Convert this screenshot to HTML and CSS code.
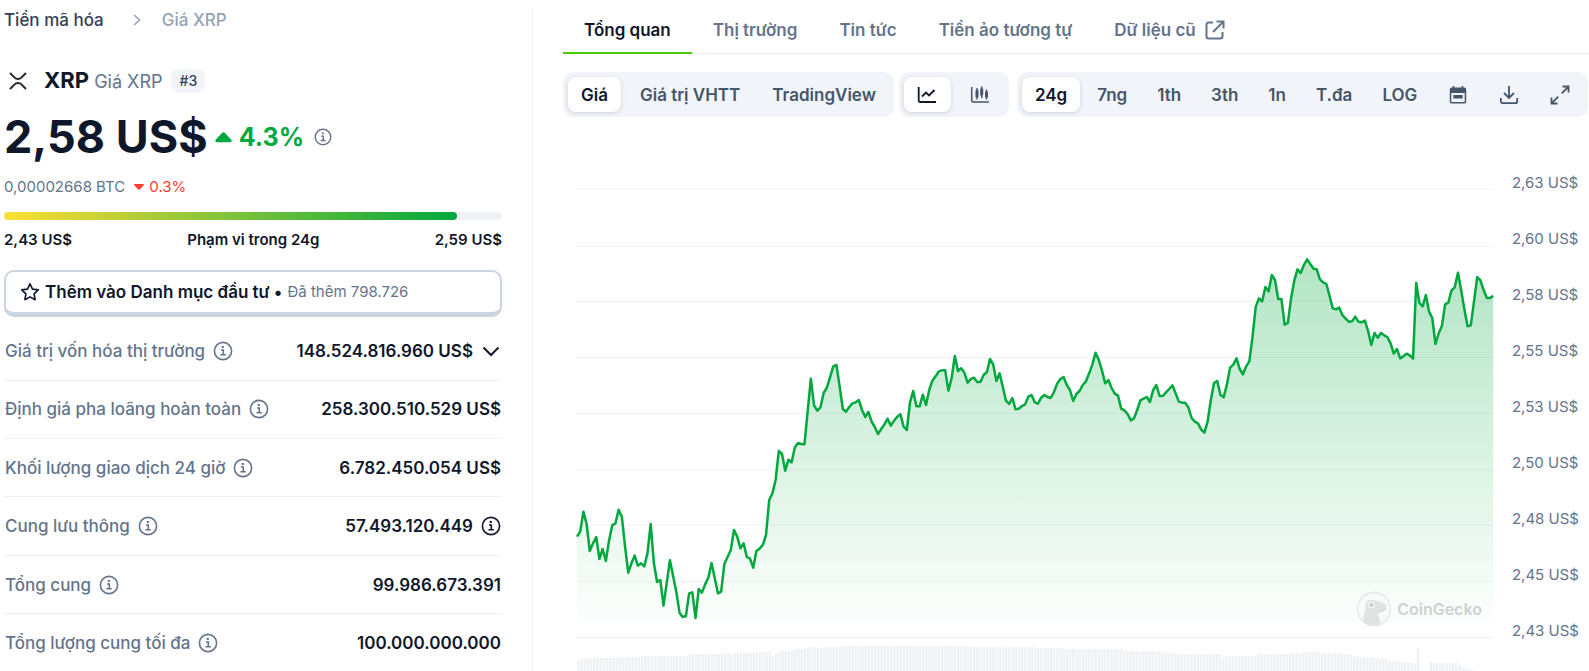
FILE: index.html
```html
<!DOCTYPE html>
<html lang="vi">
<head>
<meta charset="utf-8">
<meta name="viewport" content="width=device-width, initial-scale=1">
<title>XRP – Giá XRP</title>
<link rel="stylesheet" href="styles.css">
</head>
<body>
<svg class="sprite" aria-hidden="true">
  <symbol id="info" viewBox="0 0 20 20">
    <circle cx="10" cy="10" r="8.6" fill="none" stroke="currentColor" stroke-width="1.6"/>
    <circle cx="9.8" cy="5.9" r="1.2" fill="currentColor"/>
    <path d="M8 9h2.3v4.6M7.4 13.8h5.4" fill="none" stroke="currentColor" stroke-width="1.6"/>
  </symbol>
</svg>
<div class="page">
  <aside class="coin">
    <nav class="crumbs" aria-label="Breadcrumb">
      <a class="crumb" href="#">Tiền mã hóa</a>
      <svg class="crumb-sep" viewBox="0 0 10 14" aria-hidden="true"><path d="M2 2l5.5 5L2 12" /></svg>
      <span class="crumb-current">Giá XRP</span>
    </nav>

    <div class="title">
      <svg class="coin-logo" viewBox="0 0 28 28" aria-hidden="true"><path d="M6 6l4.6 4.6a4.8 4.8 0 0 0 6.8 0L22 6M6 22l4.6-4.6a4.8 4.8 0 0 1 6.8 0L22 22"/></svg>
      <h1 class="name">XRP <span class="name-sub">Giá XRP</span></h1>
      <span class="rank">#3</span>
    </div>

    <div class="price-row">
      <span class="price">2,58 US$</span>
      <span class="change">
        <svg class="caret-up" viewBox="0 0 17 11" aria-hidden="true"><path d="M7.5.6a1.5 1.5 0 0 1 2 0l6.8 7.2c.8 1 .3 2.4-1 2.4H1.700c-1.300 0-1.800-1.400-1-2.400z"/></svg>
        4.3%
      </span>
      <svg class="info info-small" aria-hidden="true"><use href="#info"/></svg>
    </div>

    <div class="btc-row">
      <span>0,00002668 BTC</span>
      <span class="btc-change">
        <svg class="caret-down" viewBox="0 0 10 6" aria-hidden="true"><path d="M.8 0h8.400c.7 0 1 .8.5 1.300L5.700 5.400a1 1 0 0 1-1.400 0L.3 1.300C-.2.800.1 0 .8 0z"/></svg>
        0.3%
      </span>
    </div>

    <div class="range"><div class="range-fill"></div></div>
    <div class="range-labels"><span>2,43 US$</span><span>Phạm vi trong 24g</span><span>2,59 US$</span></div>

    <button class="portfolio" type="button">
      <svg class="star" viewBox="0 0 20 20" aria-hidden="true"><path d="M10 1.800l2.500 5.300 5.800.8-4.200 4 1 5.800L10 14.900l-5.100 2.800 1-5.800-4.200-4 5.800-.8z"/></svg>
      <span>Thêm vào Danh mục đầu tư •</span>
      <span class="portfolio-count">Đã thêm 798.726</span>
    </button>

    <table class="stats">
      <tbody>
        <tr><th scope="row"><span class="cell">Giá trị vốn hóa thị trường <svg class="info" aria-hidden="true"><use href="#info"/></svg></span></th>
          <td><span class="cell cell-end">148.524.816.960 US$ <svg class="chevron" viewBox="0 0 20 20" aria-hidden="true"><path d="M2.500 6.500L10 14l7.500-7.500"/></svg></span></td></tr>
        <tr><th scope="row"><span class="cell">Định giá pha loãng hoàn toàn <svg class="info" aria-hidden="true"><use href="#info"/></svg></span></th>
          <td><span class="cell cell-end">258.300.510.529 US$</span></td></tr>
        <tr><th scope="row"><span class="cell">Khối lượng giao dịch 24 giờ <svg class="info" aria-hidden="true"><use href="#info"/></svg></span></th>
          <td><span class="cell cell-end">6.782.450.054 US$</span></td></tr>
        <tr><th scope="row"><span class="cell">Cung lưu thông <svg class="info" aria-hidden="true"><use href="#info"/></svg></span></th>
          <td><span class="cell cell-end">57.493.120.449 <svg class="info" aria-hidden="true"><use href="#info"/></svg></span></td></tr>
        <tr><th scope="row"><span class="cell">Tổng cung <svg class="info" aria-hidden="true"><use href="#info"/></svg></span></th>
          <td><span class="cell cell-end">99.986.673.391</span></td></tr>
        <tr><th scope="row"><span class="cell">Tổng lượng cung tối đa <svg class="info" aria-hidden="true"><use href="#info"/></svg></span></th>
          <td><span class="cell cell-end">100.000.000.000</span></td></tr>
      </tbody>
    </table>
  </aside>

  <main class="main">
    <nav class="tabs">
      <a class="tab tab-active" href="#">Tổng quan</a>
      <a class="tab" href="#">Thị trường</a>
      <a class="tab" href="#">Tin tức</a>
      <a class="tab" href="#">Tiền ảo tương tự</a>
      <a class="tab" href="#">Dữ liệu cũ
        <svg class="external" viewBox="0 0 20 20" aria-hidden="true"><path d="M8 2.500H3.500a2 2 0 0 0-2 2v12a2 2 0 0 0 2 2h12a2 2 0 0 0 2-2V12M11.500 1.500h7v7M18 2L8 12"/></svg>
      </a>
    </nav>

    <div class="toolbar">
      <div class="group">
        <button class="opt opt-on" type="button">Giá</button>
        <button class="opt" type="button">Giá trị VHTT</button>
        <button class="opt" type="button">TradingView</button>
      </div>
      <div class="group">
        <button class="opt opt-icon opt-on" type="button" aria-label="Biểu đồ đường"><svg class="icon" viewBox="0 0 20 20"><path d="M1.700 2v13.500a1.500 1.500 0 0 0 1.500 1.500H19M5 11.500l4-4 3 3 5.500-5.500" fill="none" stroke="currentColor" stroke-width="1.800"/></svg></button>
        <button class="opt opt-icon" type="button" aria-label="Biểu đồ nến"><svg class="icon" viewBox="0 0 20 20"><path d="M1.700 2v13.500a1.500 1.500 0 0 0 1.500 1.500H19M7 3v11.500M11.700 1.500v11.500M16.500 4.500v10" fill="none" stroke="currentColor" stroke-width="1.500"/><rect x="5.500" y="5" width="3" height="7.500" rx=".8"/><rect x="10.200" y="3.500" width="3" height="7" rx=".8"/><rect x="15" y="6.500" width="3" height="6" rx=".8"/></svg></button>
      </div>
      <div class="group group-range">
        <button class="opt opt-on" type="button">24g</button>
        <button class="opt" type="button">7ng</button>
        <button class="opt" type="button">1th</button>
        <button class="opt" type="button">3th</button>
        <button class="opt" type="button">1n</button>
        <button class="opt" type="button">T.đa</button>
        <button class="opt" type="button">LOG</button>
        <button class="opt opt-icon" type="button" aria-label="Chọn ngày"><svg class="icon" viewBox="0 0 20 20"><path d="M5.500 1v3M14.500 1v3" stroke="currentColor" stroke-width="1.600"/><path fill-rule="evenodd" d="M3.500 2.500h13A1.700 1.700 0 0 1 18.200 4.200v12.600a1.700 1.700 0 0 1-1.700 1.700h-13a1.700 1.700 0 0 1-1.700-1.700V4.200a1.700 1.700 0 0 1 1.700-1.700zM3.300 8v8.500c0 .3.200.5.500.5h12.400c.3 0 .5-.2.500-.5V8z"/><rect x="5.300" y="10" width="9.400" height="3.600" rx=".5"/></svg></button>
        <button class="opt opt-icon" type="button" aria-label="Tải xuống"><svg class="icon" viewBox="0 0 20 20"><path d="M10 1v11.500M5 8l5 5 5-5M1.800 13v3.500A1.700 1.700 0 0 0 3.500 18.200h13a1.700 1.700 0 0 0 1.700-1.700V13" fill="none" stroke="currentColor" stroke-width="1.800"/></svg></button>
        <button class="opt opt-icon" type="button" aria-label="Toàn màn hình"><svg class="icon" viewBox="0 0 20 20"><path d="M12.500 1.500h6v6M18.200 1.800l-6.500 6.500M1.500 12.500v6h6M1.800 18.200l6.500-6.500" fill="none" stroke="currentColor" stroke-width="1.800"/></svg></button>
      </div>
    </div>

    <div class="chart">
      <div class="plot">
        <svg class="plot-svg" viewBox="0 0 2754 1662" preserveAspectRatio="none" role="img" aria-label="Biểu đồ giá XRP trong 24 giờ">
          <defs>
            <linearGradient id="fade" gradientUnits="userSpaceOnUse" x1="0" y1="427" x2="0" y2="1550">
              <stop offset="0" stop-color="#00a83e" stop-opacity=".3"/>
              <stop offset="1" stop-color="#00a83e" stop-opacity="0"/>
            </linearGradient>
          </defs>
          <g id="grid" class="grid"></g>
          <g id="volume" class="volume"></g>
          <path id="area" fill="url(#fade)"/>
          <path id="line" class="line"/>
        </svg>
        <div class="watermark">
          <svg class="gecko" viewBox="0 0 36 36" aria-hidden="true">
            <circle cx="18" cy="18" r="16.500" fill="#f8faf9" stroke="#e2e6e4" stroke-width="1.300"/>
            <path d="M7.500 31c-1-5 1-8.500 2-12 .6-2.500-1.200-4.500.8-7.500C12 9 15 8.500 18 9.300c3 .8 6.500 1.500 9.500 3 2.500 1.200 3.500 3.500 2.500 5.500-1.500 2.700-5 3.700-8 4.200 0 3 1.500 5 2 8 .2 1.500 0 3 0 3.500-5.500 2.500-12 1.500-16.500-2.500z" fill="#dfe3e1"/>
            <circle cx="15.500" cy="14" r="3.200" fill="#f8faf9"/>
            <circle cx="15.500" cy="14" r="2" fill="#c6cbc8"/>
            <path d="M22 21c3-.3 6-1.500 8-4" fill="none" stroke="#c9cecb" stroke-width=".8"/>
          </svg>
          <span>CoinGecko</span>
        </div>
      </div>
      <ul class="axis">
        <li>2,63 US$</li><li>2,60 US$</li><li>2,58 US$</li><li>2,55 US$</li><li>2,53 US$</li><li>2,50 US$</li><li>2,48 US$</li><li>2,45 US$</li><li>2,43 US$</li>
      </ul>
    </div>
  </main>
</div>
<script src="chart.js"></script>
</body>
</html>
```

FILE: styles.css
```css
* { box-sizing: border-box; }

body {
  margin: 0;
  background: #fff;
  color: #0f172a;
  font-family: Inter, "Liberation Sans", sans-serif;
  font-size: 17px;
  line-height: 24px;
  overflow: hidden;
}

a { color: inherit; text-decoration: none; }
button { font: inherit; color: inherit; border: 0; cursor: pointer; }
svg { flex: none; }
.sprite { display: none; }

.page { display: flex; min-height: 100vh; padding-top: 8px; }

/* Coin summary column */
.coin {
  display: flex;
  flex-direction: column;
  flex: 0 0 34%;
  max-width: 533px;
  padding: 0 30px 0 4px;
  border-right: 1px solid #eff2f5;
}

.crumbs { display: flex; align-items: center; font-weight: 500; }
.crumb { color: #334155; }
.crumb-sep { width: 10px; height: 14px; margin: 0 20px 0 28px; fill: none; stroke: #94a3b8; stroke-width: 1.5; }
.crumb-current { color: #94a3b8; }

.title { display: flex; align-items: center; margin-top: 35px; height: 28px; }
.coin-logo { width: 28px; height: 28px; fill: none; stroke: #23292f; stroke-width: 2; }
.name { margin: 0 9px 0 12px; font-size: 22px; font-weight: 700; }
.name-sub { color: #64748b; font-size: 18px; font-weight: 400; }
.rank { padding: 0 8px; border-radius: 8px; background: #f1f5f9; color: #334155; font-size: 14px; font-weight: 500; }

.price-row { display: flex; align-items: center; margin-top: 14px; height: 56px; }
.price { font-size: 45px; font-weight: 700; line-height: 56px; }
.change { display: flex; align-items: center; gap: 7px; margin-left: 7px; color: #00a83e; font-size: 25px; font-weight: 700; }
.caret-up { width: 17px; height: 11px; fill: currentColor; }

.btc-row { display: flex; align-items: center; gap: 9px; margin-top: 10px; color: #64748b; font-size: 15px; }
.btc-change { display: flex; align-items: center; gap: 5px; color: #ff3a33; }
.caret-down { width: 10px; height: 6px; fill: currentColor; }

.range { height: 8px; margin-top: 13px; border-radius: 4px; background: #eff2f5; overflow: hidden; }
.range-fill { width: 91%; height: 100%; border-radius: 4px; background: linear-gradient(90deg, #ffde33, #00a83e); }
.range-labels { display: flex; justify-content: space-between; margin-top: 8px; font-size: 15px; font-weight: 600; }

.portfolio {
  display: flex;
  align-items: center;
  gap: 5px;
  margin-top: 18px;
  padding: 8px 14px;
  border: 2px solid #cbd5e1;
  border-bottom-width: 5px;
  border-radius: 10px;
  background: #fff;
  font-weight: 600;
}
.star { width: 20px; height: 20px; fill: none; stroke: currentColor; stroke-width: 1.6; stroke-linejoin: round; }
.portfolio-count { color: #64748b; font-size: 15px; font-weight: 400; }

.stats { flex: 1; width: 100%; margin-top: 6px; border-collapse: collapse; }
.stats th, .stats td { padding: 0 1px; border-bottom: 1px solid #eff2f5; white-space: nowrap; }
.stats tr:last-child > * { border-bottom: 0; }
.stats th { color: #64748b; font-weight: 500; text-align: left; }
.stats td { font-weight: 600; }
.cell { display: flex; align-items: center; gap: 8px; }
.cell-end { justify-content: flex-end; }
.info { width: 20px; height: 20px; }
.info-small { width: 18px; height: 18px; margin-left: 10px; color: #64748b; }
.chevron { width: 20px; height: 20px; fill: none; stroke: currentColor; stroke-width: 2; }

/* Chart column */
.main { display: flex; flex-direction: column; flex: 1; min-width: 0; padding-left: 30px; }

.tabs { display: flex; height: 46px; border-bottom: 1px solid #eff2f5; color: #64748b; font-weight: 600; white-space: nowrap; }
.tab { display: flex; align-items: center; gap: 9px; height: 46px; padding: 0 21px; border-bottom: 2px solid transparent; }
.tab-active { border-color: #4bcc00; color: #0f172a; }
.external { width: 20px; height: 20px; fill: none; stroke: currentColor; stroke-width: 2; }

.toolbar { display: flex; gap: 5px; margin-top: 18px; white-space: nowrap; }
.group { display: flex; flex: none; gap: 6px; padding: 5px; border-radius: 10px; background: #f1f5f9; }
.group-range { gap: 4px; margin-left: 3px; }
.opt { height: 35px; padding: 0 13px; border-radius: 8px; background: none; color: #475569; font-weight: 600; }
.opt-on { background: #fff; color: #0f172a; box-shadow: 0 1px 4px rgba(15, 23, 42, .15); }
.opt-icon { display: flex; align-items: center; justify-content: center; width: 47px; }
.icon { width: 20px; height: 20px; fill: currentColor; }

.chart { display: flex; flex: 1; min-height: 0; padding-left: 13px; }
.plot { position: relative; flex: 1; min-width: 0; height: 554px; }
.plot-svg { display: block; width: 100%; height: 100%; }
.grid line { stroke: #eff2f5; stroke-width: 1; vector-effect: non-scaling-stroke; }
.volume { fill: #eff2f5; }
.line { fill: none; stroke: #00a83e; stroke-width: 2.5; stroke-linejoin: round; vector-effect: non-scaling-stroke; }

.watermark { position: absolute; right: 12px; bottom: 44px; display: flex; align-items: center; gap: 5px; color: #cdd2d0; font-size: 16px; font-weight: 600; }
.gecko { width: 36px; height: 36px; }

.axis {
  display: flex;
  flex-direction: column;
  justify-content: space-between;
  height: 554px;
  margin: 0;
  padding: 54px 10px 28px 18px;
  list-style: none;
  color: #64748b;
  font-size: 15px;
}
```

FILE: chart.js
```js
// Plot space is 2754 x 1662 units; y grows downwards.
const WIDTH = 2754;
const HEIGHT = 1662;
const BASELINE = 1561;
const RIGHT = 2752;

// Price samples: each run starts at x and its values are offset by y.
const runs = [
  { x: 3, y: 909, v: [350,335,275,312,393,370,351,417,387,423,362,316,310,269,290,380,458,430,407,437,430,439,400,312,430,486,480,557,490,421,468,515,578,591,588,520,517,594,507,518,493,473,429,475,520,515,432,411,391,330,350,385,370,411,416,443,393,386,375,345,240,220,180,93,102,152,119,127,82,69,72,73] },
  { x: 695, y: 669, v: [215,116,196,212,202,159,143,112,79,75,140,207,215,201,190,187,180,210,231,216,245,261,282,267,253,236,257,242,230,223,260,270,187,153,199,199,164,195,150,122,109,94,91,91,152,115,48,93,85,98,128,117,113,126,126,105,97,57,73,123,100,140,182,192,174,208,206,198,193,170,165,187,191,173,165,171,174] },
  { x: 1434, y: 639, v: [186,161,147,141,165,180,213,192,183,165,154,130,103,68,90,122,160,150,174,191,197,236,241,252,271,265,240,211,206,201,216,180,165,198,198,187,177,166,190,215,218,218,233,264,275,280,299,308] },
  { x: 1895, y: 369, v: [545,480,429,423,465,472,434,383,374,355,387,403,379,364,290,200,175,184,141,154,105,120,177,177,254,249,175,122,88,99,75,58,72,86,88,118,127,132,168,205,208,203,225,236,245,244,230,245,247,242,273,315,279,293,279,286,291,310,341,327,355,349,341,346,356,129,189,199,165,215,234,312,280,258,193,188,151,142,98,150,208,259,256,185,111,121,150,174,174,167] }
];

const points = [];
runs.forEach((run, i) => {
  const next = runs[i + 1];
  const step = next ? (next.x - run.x) / run.v.length : (RIGHT - run.x) / (run.v.length - 1);
  run.v.forEach((value, k) => points.push((run.x + k * step).toFixed(1) + ' ' + (run.y + value)));
});

const path = 'M' + points.join('L');
document.getElementById('line').setAttribute('d', path);
document.getElementById('area').setAttribute('d', path + `L${RIGHT} ${BASELINE}L3 ${BASELINE}Z`);

function add(parent, name, attrs) {
  const el = document.createElementNS('http://www.w3.org/2000/svg', name);
  Object.keys(attrs).forEach((key) => el.setAttribute(key, attrs[key]));
  parent.appendChild(el);
}

const grid = document.getElementById('grid');
[216, 388, 553, 721, 889, 1059, 1224, 1393, BASELINE].forEach((y) => {
  add(grid, 'line', { x1: 0, x2: WIDTH, y1: y, y2: y });
});

// Volume profile: [start x, bar height]
const levels = [[0,10],[10,12],[28,13],[40,12],[50,13],[126,14],[192,15],[336,17],[440,18],[464,17],[472,18],[549,19],[587,15],[596,18],[606,20],[654,22],[693,23],[702,24],[722,23],[741,24],[798,25],[1030,24],[1038,25],[1150,24],[1164,25],[1191,24],[1259,23],[1269,24],[1277,23],[1286,24],[1383,23],[1461,22],[1643,20],[1749,19],[1759,18],[1787,17],[1931,13],[1941,15],[2036,17],[2141,18],[2192,19],[2228,18],[2297,17],[2325,15],[2334,14],[2364,13],[2402,12],[2432,10],[2460,9],[2485,8],[2508,7],[2516,23],[2526,9],[2534,0],[2556,9],[2571,8],[2641,6],[2650,3],[2671,2],[2680,1],[2690,0]];
const volume = document.getElementById('volume');
let level = 0;
for (let x = 3; x < 2690; x += 9.58) {
  while (level + 1 < levels.length && levels[level + 1][0] <= x + 2) level += 1;
  const h = levels[level][1] * 3;
  add(volume, 'rect', { x: x.toFixed(1), y: HEIGHT - h, width: 7.6, height: h });
}
```
